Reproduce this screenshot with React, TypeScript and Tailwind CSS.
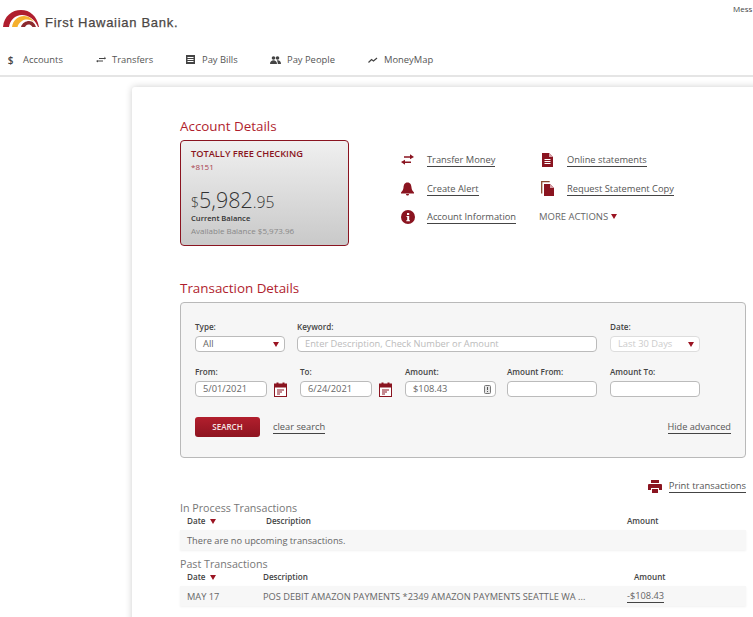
import React from "react";

const Red = "#8a1420";

function Tri({ className = "" }: { className?: string }) {
  return (
    <svg width="6" height="5" viewBox="0 0 6 5" className={className}>
      <path d="M0 0h6L3 5z" fill="#9b1422" />
    </svg>
  );
}

function Logo() {
  return (
    <svg width="36" height="17" viewBox="0 0 36 17" className="shrink-0">
      <path d="M0 17C1 6 9 0 18 0c9 0 16 6 18 17h-1C32 9 25 5 19 5 12 5 7 10 6 17z" fill="#b01e2e" />
      <path d="M9 17c1-7 6-11 12-11 5 0 8 3 10 6-4-3-9-3-12-1-3 2-4 4-4.500 6z" fill="#f5b02e" />
      <path d="M18 17c1-4 5-6 8-6 4 0 6 3 7 6h-3.500c-1.500-2-2.500-2.500-4-2.500-2 0-2.500 1-3.500 2.500z" fill="#8c2a2e" />
    </svg>
  );
}

function NavItem({ icon, label, width, gap = "gap-[5px]" }: { icon: React.ReactNode; label: string; width: string; gap?: string }) {
  return (
    <div className={`flex items-center ${gap} ${width}`}>
      <span className="flex w-[13px] justify-center">{icon}</span>
      <span className="text-[9.400px] text-[#555]">{label}</span>
    </div>
  );
}

function ActionLink({ icon, label, h = "h-[29px]" }: { icon: React.ReactNode; label: string; h?: string }) {
  return (
    <div className={`flex items-center ${h}`}>
      <span className="flex w-[27px] justify-start pl-[1px]">{icon}</span>
      <a className="border-b border-[#444] text-[9.300px] leading-[13px] text-[#555]">{label}</a>
    </div>
  );
}

function Field({ label, children, className = "" }: { label: string; children: React.ReactNode; className?: string }) {
  return (
    <div className={`flex flex-col ${className}`}>
      <span className="mb-[3px] text-[8.100px] font-semibold leading-[12px] text-[#444]">{label}</span>
      {children}
    </div>
  );
}

const inputCls =
  "flex h-[16px] items-center rounded-[4px] border border-[#bbb] bg-white px-[7px] text-[9.300px] text-[#666]";

function Cal() {
  return (
    <svg width="13" height="15" viewBox="0 0 13 15" className="shrink-0">
      <rect x="0.500" y="2" width="12" height="12.500" fill="#fff" stroke={Red} />
      <rect x="0" y="2" width="13" height="3.500" fill={Red} />
      <rect x="2.500" y="0.500" width="2" height="2.500" fill={Red} />
      <rect x="8.500" y="0.500" width="2" height="2.500" fill={Red} />
      <path d="M3 8h7M3 10h5M3 12h3" stroke={Red} strokeWidth="1" />
    </svg>
  );
}

export default function App() {
  return (
    <div
      className="relative h-[617px] w-[753px] overflow-hidden bg-white"
      style={{ fontFamily: '"Open Sans", "Noto Sans", sans-serif' }}
    >
      <header className="h-[77px] border-b-2 border-[#e5e5e5]">
        <div className="flex h-[43px] items-start justify-between">
          <div className="ml-[3px] mt-[10px] flex items-start gap-[6px]">
            <Logo />
            <span
              className="mt-[5px] text-[13px] font-normal leading-[16px] tracking-[0.7px] text-[#4b4644]"
              style={{ fontFamily: '"Liberation Sans", sans-serif', WebkitTextStroke: "0.25px #4b4644" }}
            >
              First Hawaiian Bank.
            </span>
          </div>
          <span className="mt-[3px] w-[20px] whitespace-nowrap text-[8px] leading-[11px] text-[#444]">Mess</span>
        </div>
        <nav className="ml-[4px] flex h-[32px] items-center pt-[2px]">
          <NavItem
            width="w-[90px]"
            gap="gap-[6px]"
            label="Accounts"
            icon={<span className="text-[10px] font-semibold leading-none text-[#444]">$</span>}
          />
          <NavItem
            width="w-[90px]"
            label="Transfers"
            icon={
              <svg width="10" height="7" viewBox="0 0 10 7">
                <path d="M3 2h5.500V.5L10 2.500 8.500 3.500V3H3zM7 4.500H2V4L0 5l2 1.500V5.500h5z" fill="#444" />
              </svg>
            }
          />
          <NavItem
            width="w-[85px]"
            label="Pay Bills"
            icon={
              <svg width="9" height="9" viewBox="0 0 9 9">
                <path d="M0 0h9v9H0z" fill="#444" />
                <path d="M1.500 2.500h6M1.500 4.500h6M1.500 6.500h6" stroke="#fff" />
              </svg>
            }
          />
          <NavItem
            width="w-[97px]"
            label="Pay People"
            icon={
              <svg width="11" height="8" viewBox="0 0 11 8">
                <circle cx="3.500" cy="2" r="1.800" fill="#444" />
                <circle cx="7.500" cy="2" r="1.800" fill="#444" />
                <path d="M0 8c0-5 7-5 7 0zM7.800 8c0-2-.5-3-1-3.500 2-.7 4.200.5 4.200 3.500z" fill="#444" />
              </svg>
            }
          />
          <NavItem
            width="w-[90px]"
            label="MoneyMap"
            icon={
              <svg width="10" height="6" viewBox="0 0 10 6">
                <path d="M.5 5.500 3.500 2.500 5.500 4 9 1" stroke="#444" strokeWidth="1.200" fill="none" />
              </svg>
            }
          />
        </nav>
      </header>

      <main className="ml-[132px] mt-[10px] h-[560px] w-[640px] rounded-tl-[3px] bg-white pl-[48px] pt-[30px] shadow-[0_0_7px_rgba(0,0,0,0.2)]">
        <h2 className="text-[13.400px] leading-[18px] text-[#b01e2e]">Account Details</h2>

        <section className="mt-[5px] flex">
          <div className="h-[106px] w-[169px] rounded-[4px] border border-[#8a1420] bg-gradient-to-b from-[#f0f0f0] to-[#c9c9c9] pl-[10px] pt-[6px]">
            <div className="text-[9.250px] font-semibold leading-[14px] text-[#8a1420]">TOTALLY FREE CHECKING</div>
            <div className="text-[8px] leading-[11px] text-[#a8404c]">*8151</div>
            <div className="mt-[16px] flex items-baseline leading-[24px] text-[#333]">
              <span className="text-[14px] font-light">$</span>
              <span className="text-[21.500px] font-light">5,982</span>
              <span className="text-[15.700px] font-light">.95</span>
            </div>
            <div className="-mt-[2px] text-[7.600px] font-semibold leading-[11px] text-[#333]">Current Balance</div>
            <div className="mt-[1px] text-[8px] leading-[11px] text-[#888]">Available Balance $5,973.96</div>
          </div>

          <div className="ml-[51px] mt-[5px] w-[140px]">
            <ActionLink
              label="Transfer Money"
              icon={
                <svg width="13" height="11" viewBox="0 0 13 11">
                  <path d="M3 2.300h6V.3L13 3 9 5.300V3.800H3zM10 7.500H4V5.700L0 8l4 2.700V9h6z" fill={Red} />
                </svg>
              }
            />
            <ActionLink
              label="Create Alert"
              icon={
                <svg width="13" height="14" viewBox="0 0 13 14">
                  <path d="M6.500 0.500c3 0 3.800 2.500 4 5 .2 2 1 3.500 2.500 5v1H0v-1c1.500-1.500 2.300-3 2.500-5 .2-2.500 1-5 4-5z" fill={Red} />
                  <path d="M5 12h3c0 2-3 2-3 0z" fill={Red} />
                </svg>
              }
            />
            <ActionLink
              h="h-[27px]"
              label="Account Information"
              icon={
                <svg width="14" height="14" viewBox="0 0 14 14">
                  <circle cx="7" cy="7" r="7" fill={Red} />
                  <path d="M5.500 6h2.700v4.200h.8v1H5.300v-1h.9V7H5.500z" fill="#fff" />
                  <rect x="6" y="3" width="2.200" height="2" fill="#fff" />
                </svg>
              }
            />
          </div>
          <div className="mt-[5px]">
            <ActionLink
              label="Online statements"
              icon={
                <svg width="11" height="14" viewBox="0 0 11 14" className="ml-[1px]">
                  <path d="M0 0h7l4 4v10H0z" fill={Red} />
                  <path d="M7 0v4h4" fill="#d8a0a8" />
                  <path d="M2.500 6.500h6M2.500 8.500h6M2.500 10.500h6" stroke="#fff" />
                </svg>
              }
            />
            <ActionLink
              label="Request Statement Copy"
              icon={
                <svg width="14" height="15" viewBox="0 0 14 15">
                  <path d="M.7 12.500V.7h8" fill="none" stroke="#8a4a30" strokeWidth="1.300" />
                  <path d="M3 3h6l4 4v8H3z" fill={Red} />
                  <path d="M9 3v4h4z" fill="#d8a0a8" />
                </svg>
              }
            />
            <div className="-ml-[1px] flex h-[27px] items-center gap-[3px] pt-[2px] text-[9.500px] text-[#666]">
              MORE ACTIONS <Tri className="-mt-[2px]" />
            </div>
          </div>
        </section>

        <h2 className="mt-[33px] text-[13.400px] leading-[18px] text-[#b01e2e]">Transaction Details</h2>

        <section className="mt-[5px] h-[156px] w-[566px] rounded-[4px] border border-[#b9b9b9] bg-[#f6f6f6] px-[14px] pt-[18px]">
          <div className="flex">
            <Field label="Type:" className="w-[102px]">
              <div className={`${inputCls} w-[90px] justify-between pr-[5px]`}>
                All <Tri />
              </div>
            </Field>
            <Field label="Keyword:" className="w-[313px]">
              <div className={`${inputCls} w-[300px] text-[#bbb]`}>Enter Description, Check Number or Amount</div>
            </Field>
            <Field label="Date:">
              <div className={`${inputCls} w-[90px] justify-between border-[#ddd] pr-[5px] text-[#ccc]`}>
                Last 30 Days <Tri />
              </div>
            </Field>
          </div>
          <div className="mt-[14px] flex">
            <Field label="From:" className="w-[105px]">
              <div className="flex items-center gap-[7px]">
                <div className={`${inputCls} w-[72px]`}>5/01/2021</div>
                <Cal />
              </div>
            </Field>
            <Field label="To:" className="w-[105px]">
              <div className="flex items-center gap-[7px]">
                <div className={`${inputCls} w-[72px]`}>6/24/2021</div>
                <Cal />
              </div>
            </Field>
            <Field label="Amount:" className="w-[102px]">
              <div className={`${inputCls} w-[91px] justify-between pr-[4px]`}>
                $108.43
                <svg width="7" height="9" viewBox="0 0 7 9">
                  <rect x="0.500" y="0.500" width="6" height="8" rx="1" fill="#e5e5e5" stroke="#777" />
                  <path d="M3.500 2v3M3.500 6v1" stroke="#555" />
                </svg>
              </div>
            </Field>
            <Field label="Amount From:" className="w-[103px]">
              <div className={`${inputCls} w-[90px]`} />
            </Field>
            <Field label="Amount To:">
              <div className={`${inputCls} w-[90px]`} />
            </Field>
          </div>
          <div className="mt-[20px] flex items-center">
            <button className="h-[20px] w-[65px] rounded-[3px] bg-gradient-to-b from-[#b21f2d] to-[#8e1420] text-[8px] font-semibold text-[#f5e5e5]">
              SEARCH
            </button>
            <a className="ml-[13px] border-b border-[#444] text-[9.300px] leading-[12px] text-[#555]">clear search</a>
            <a className="ml-auto border-b border-[#444] text-[9.200px] leading-[12px] text-[#555]">Hide advanced</a>
          </div>
        </section>

        <div className="mt-[22px] flex h-[13px] w-[566px] items-center justify-end gap-[7px]">
          <svg width="14" height="13" viewBox="0 0 14 13">
            <path d="M3 0h8v3H3zM1 4h12a1 1 0 0 1 1 1v5h-3V8H3v2H0V5a1 1 0 0 1 1-1z" fill={Red} />
            <path d="M4 9h6v4H4z" fill={Red} />
          </svg>
          <a className="border-b border-[#444] text-[9.400px] leading-[12px] text-[#555]">Print transactions</a>
        </div>

        <h3 className="mt-[8px] text-[10.700px] leading-[14px] text-[#777]">In Process Transactions</h3>
        <div className="mb-[2px] flex h-[13px] w-[566px] items-center pl-[7px] text-[8.100px] font-semibold text-[#444]">
          <span className="flex w-[79px] items-center gap-[4px]">
            Date <Tri />
          </span>
          <span className="w-[361px]">Description</span>
          <span>Amount</span>
        </div>
        <div className="flex h-[20px] w-[566px] items-center bg-[#f7f7f7] pl-[7px] pt-[1px] text-[9.250px] text-[#666] shadow-[0_1px_2px_rgba(0,0,0,0.06)]">
          There are no upcoming transactions.
        </div>

        <h3 className="mt-[7px] text-[10.700px] leading-[14px] text-[#777]">Past Transactions</h3>
        <div className="mb-[2px] flex h-[13px] w-[566px] items-center pl-[7px] text-[8.100px] font-semibold text-[#444]">
          <span className="flex w-[76px] items-center gap-[4px]">
            Date <Tri />
          </span>
          <span className="w-[371px]">Description</span>
          <span>Amount</span>
        </div>
        <div className="flex h-[20px] w-[566px] items-center bg-[#f7f7f7] pl-[7px] pt-[1px] text-[9.250px] text-[#666] shadow-[0_1px_2px_rgba(0,0,0,0.06)]">
          <span className="w-[76px]">MAY 17</span>
          <span className="w-[364px] whitespace-nowrap">POS DEBIT AMAZON PAYMENTS *2349 AMAZON PAYMENTS SEATTLE WA ...</span>
          <a className="border-b border-[#444] leading-[12px]">-$108.43</a>
        </div>
      </main>
    </div>
  );
}
